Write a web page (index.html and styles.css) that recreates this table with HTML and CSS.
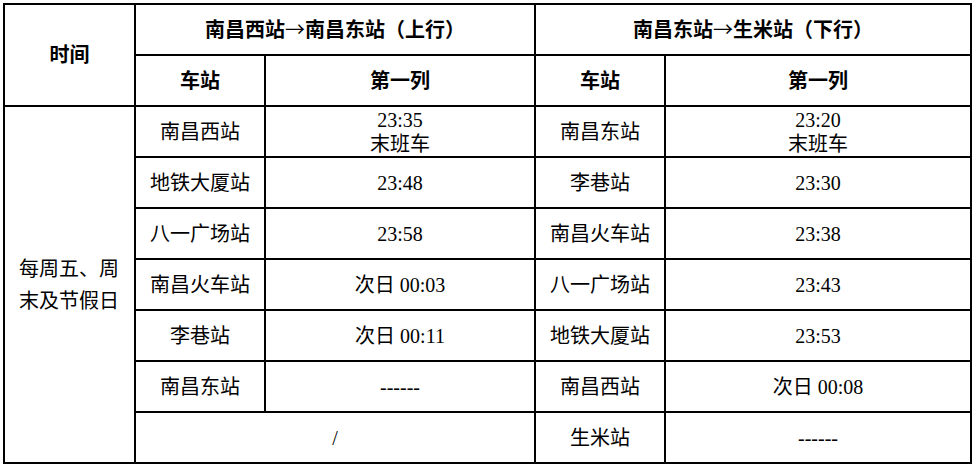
FILE: index.html
```html
<!DOCTYPE html>
<html lang="zh-CN">
<head>
<meta charset="utf-8">
<title>末班车时刻表</title>
<link rel="stylesheet" href="styles.css">
</head>
<body>
<table class="schedule">
  <colgroup>
    <col class="c-time">
    <col class="c-st1">
    <col class="c-tm1">
    <col class="c-st2">
    <col class="c-tm2">
  </colgroup>
  <thead>
    <tr class="row">
      <th rowspan="2">时间</th>
      <th colspan="2">南昌西站<span class="arrow">→</span>南昌东站（上行）</th>
      <th colspan="2">南昌东站<span class="arrow">→</span>生米站（下行）</th>
    </tr>
    <tr class="row">
      <th>车站</th>
      <th>第一列</th>
      <th>车站</th>
      <th>第一列</th>
    </tr>
  </thead>
  <tbody>
    <tr class="row">
      <td rowspan="7"><span class="period">每周五、周末及节假日</span></td>
      <td>南昌西站</td>
      <td class="two">23:35<br>末班车</td>
      <td>南昌东站</td>
      <td class="two">23:20<br>末班车</td>
    </tr>
    <tr class="row">
      <td>地铁大厦站</td>
      <td>23:48</td>
      <td>李巷站</td>
      <td>23:30</td>
    </tr>
    <tr class="row">
      <td>八一广场站</td>
      <td>23:58</td>
      <td>南昌火车站</td>
      <td>23:38</td>
    </tr>
    <tr class="row">
      <td>南昌火车站</td>
      <td>次日 00:03</td>
      <td>八一广场站</td>
      <td>23:43</td>
    </tr>
    <tr class="row">
      <td>李巷站</td>
      <td>次日 00:11</td>
      <td>地铁大厦站</td>
      <td>23:53</td>
    </tr>
    <tr class="row">
      <td>南昌东站</td>
      <td>------</td>
      <td>南昌西站</td>
      <td>次日 00:08</td>
    </tr>
    <tr class="row">
      <td colspan="2">/</td>
      <td>生米站</td>
      <td>------</td>
    </tr>
  </tbody>
</table>
</body>
</html>
```
FILE: styles.css
```css
html, body {
  margin: 0;
  padding: 0;
  background: #fff;
}

body {
  padding: 3px 0 0 3px;
  font-family: "Liberation Serif", "Noto Sans CJK SC", serif;
  font-size: 20px;
  color: #000;
}

.schedule {
  border-collapse: collapse;
  table-layout: fixed;
  width: 967px;
}

.c-time { width: 131px; }
.c-st1 { width: 130px; }
.c-tm1 { width: 270px; }
.c-st2 { width: 130px; }
.c-tm2 { width: 306px; }

.schedule th,
.schedule td {
  border: 2px solid #000;
  padding: 0;
  text-align: center;
  vertical-align: middle;
  line-height: 24px;
}

.schedule th {
  font-weight: bold;
}

.arrow {
  font-family: "Noto Sans CJK SC", sans-serif;
  font-weight: normal;
}

.row {
  height: 51px;
}

.two {
  line-height: 20px;
}

.period {
  display: inline-block;
  width: 101px;
  line-height: 32px;
  text-align: left;
}
```
